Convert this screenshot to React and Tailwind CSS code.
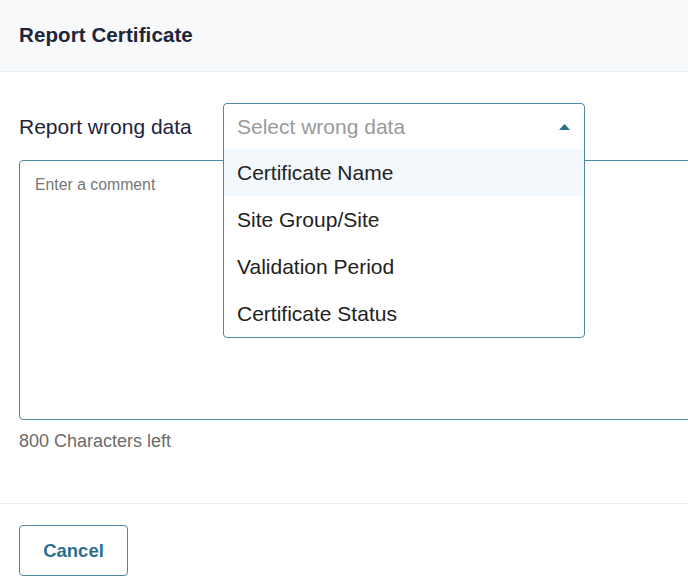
const options = ["Certificate Name", "Site Group/Site", "Validation Period", "Certificate Status"];

const App = () => {
  return (
    <div className="w-[688px] h-[587px] overflow-hidden bg-white font-['Liberation_Sans',Arial,sans-serif]">
      <div className="h-[72px] bg-[#f8f9fa] border-b border-[#e9ecef] flex items-center px-[19px]">
        <h1 className="text-[20.5px] font-bold text-[#1c2539] tracking-[0.1px]">Report Certificate</h1>
      </div>

      <div className="px-[19px] pt-[31px]">
        <div className="flex items-start">
          <label className="w-[204px] shrink-0 pt-[11px] text-[21px] leading-[26px] text-[#1c2539]">Report wrong data</label>

          <div className="relative w-[362px] h-[47px] z-10">
            <div className="absolute left-0 top-0 w-[362px] border border-[#4f86a3] rounded-[4px] bg-white">
              <div className="h-[45px] flex items-center justify-between pl-[13px] pr-[13px]">
                <span className="text-[21px] text-[#9a9a9a]">Select wrong data</span>
                <svg width="11" height="6" viewBox="0 0 11 6" className="mr-[1px]">
                  <path d="M5.5 0 L11 6 L0 6 Z" fill="#2b6f8e" />
                </svg>
              </div>
              {options.map((opt, i) => (
                <div
                  key={opt}
                  className={`h-[47px] flex items-center px-[13px] text-[21px] text-[#222] ${i === 0 ? "bg-[#f3f8fc]" : ""}`}
                >
                  {opt}
                </div>
              ))}
            </div>
          </div>
        </div>

        <div className="mt-[10px] w-[720px] h-[260px] border border-[#4f86a3] rounded-[4px] px-[15px] pt-[12px]">
          <span className="text-[15.8px] text-[#777]">Enter a comment</span>
        </div>

        <p className="mt-[8px] text-[18px] text-[#6b6b6b]">800 Characters left</p>
      </div>

      <div className="mt-[48px] border-t border-[#ececec] px-[19px] pt-[21px]">
        <button className="w-[109px] h-[51px] border border-[#4f86a3] rounded-[4px] text-[18.5px] font-bold text-[#2b6f8e]">
          Cancel
        </button>
      </div>
    </div>
  );
};

export default App;
